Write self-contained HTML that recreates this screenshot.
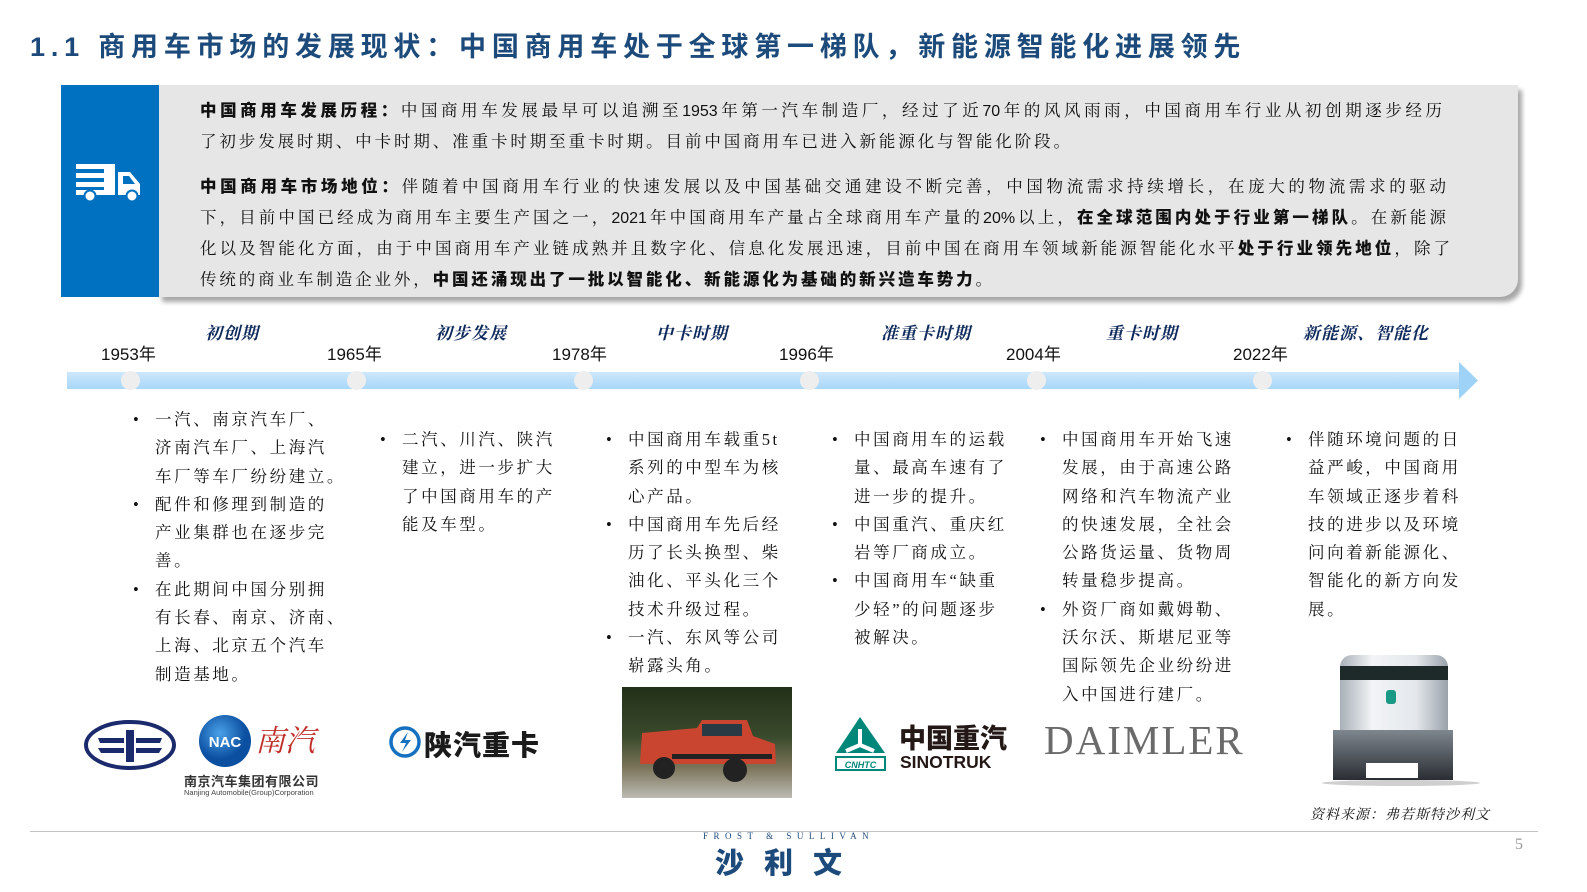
<!DOCTYPE html>
<html><head><meta charset="utf-8"><style>
*{margin:0;padding:0;box-sizing:border-box}
body{width:1587px;height:892px;background:#fff;position:relative;overflow:hidden;font-family:"Liberation Serif","Noto Serif CJK SC",serif;color:#111}
.a{position:absolute;white-space:nowrap}
.title{left:30px;top:25px;font-family:"Liberation Sans","Noto Sans CJK SC",sans-serif;font-weight:bold;font-size:27px;letter-spacing:5.8px;color:#1c4a7a}
.box{position:absolute;left:158px;top:85px;width:1360px;height:212px;background:#e6e6e6;border-bottom-right-radius:18px;box-shadow:4px 5px 5px rgba(0,0,0,.35)}
.blue{position:absolute;left:61px;top:85px;width:98px;height:212px;background:#0070c0}
.ln{position:absolute;left:200px;font-size:16.5px;height:22px;line-height:22px;text-align:justify;text-align-last:justify;white-space:nowrap}
.ln b{font-family:"Liberation Sans","Noto Sans CJK SC",sans-serif;font-weight:900}
.ln span.n{font-family:"Liberation Sans",sans-serif;font-size:16px}
.bar{position:absolute;left:67px;top:372px;width:1395px;height:17px;background:linear-gradient(#cde8fc,#a9d7f8)}
.dot{position:absolute;top:371px;width:19px;height:19px;border-radius:50%;background:#eeeeee}
.yr{position:absolute;top:340px;font-family:"Liberation Sans","Noto Sans CJK SC",sans-serif;font-size:17px;color:#111}
.ph{position:absolute;top:319px;font-family:"Liberation Serif","Noto Serif CJK SC",serif;font-weight:bold;font-style:italic;font-size:17px;color:#0f2a5c;letter-spacing:1px;transform:translateX(-50%)}
.col{position:absolute;font-size:16.5px;line-height:28.3px;letter-spacing:2.6px;white-space:nowrap}
.col div{position:relative;padding-left:22px}
.col div:before{content:"•";position:absolute;left:0;top:0}
</style></head><body>
<div class="a title">1.1 商用车市场的发展现状：中国商用车处于全球第一梯队，新能源智能化进展领先</div>

<div class="box"></div>
<div class="blue"></div>
<svg class="a" style="left:74px;top:164px" width="68" height="38" viewBox="0 0 68 38">
<rect x="2" y="0" width="32" height="5" fill="#fff"/><rect x="2" y="9" width="32" height="5" fill="#fff"/><rect x="2" y="18" width="32" height="5" fill="#fff"/><rect x="2" y="26" width="32" height="5" fill="#fff"/>
<rect x="30" y="0" width="11" height="31" fill="#fff"/>
<path d="M44 8h12l10 12v11H44z" fill="#fff"/><path d="M49 12h6l6 8H49z" fill="#0070c0"/>
<circle cx="16" cy="32" r="5.5" fill="#fff" stroke="#0070c0" stroke-width="2"/><circle cx="58" cy="32" r="5.5" fill="#fff" stroke="#0070c0" stroke-width="2"/>
</svg>

<div class="ln" style="top:100px;width:1242px"><b>中国商用车发展历程：</b>中国商用车发展最早可以追溯至<span class="n">1953</span>年第一汽车制造厂，经过了近<span class="n">70</span>年的风风雨雨，中国商用车行业从初创期逐步经历</div>
<div class="ln" style="top:131px;width:870px">了初步发展时期、中卡时期、准重卡时期至重卡时期。目前中国商用车已进入新能源化与智能化阶段。</div>
<div class="ln" style="top:176px;width:1246px"><b>中国商用车市场地位：</b>伴随着中国商用车行业的快速发展以及中国基础交通建设不断完善，中国物流需求持续增长，在庞大的物流需求的驱动</div>
<div class="ln" style="top:207px;width:1246px">下，目前中国已经成为商用车主要生产国之一，<span class="n">2021</span>年中国商用车产量占全球商用车产量的<span class="n">20%</span>以上，<b>在全球范围内处于行业第一梯队</b>。在新能源</div>
<div class="ln" style="top:238px;width:1250px">化以及智能化方面，由于中国商用车产业链成熟并且数字化、信息化发展迅速，目前中国在商用车领域新能源智能化水平<b>处于行业领先地位</b>，除了</div>
<div class="ln" style="top:269px;width:792px">传统的商业车制造企业外，<b>中国还涌现出了一批以智能化、新能源化为基础的新兴造车势力</b>。</div>

<div class="bar"></div>
<svg class="a" style="left:1459px;top:362px" width="20" height="37"><path d="M0 0L19 18.5L0 37z" fill="#9fd2f7"/></svg>
<div class="dot" style="left:121px"></div><div class="dot" style="left:347px"></div><div class="dot" style="left:574px"></div><div class="dot" style="left:800px"></div><div class="dot" style="left:1027px"></div><div class="dot" style="left:1253px"></div>
<div class="yr" style="left:101px">1953年</div><div class="yr" style="left:327px">1965年</div><div class="yr" style="left:552px">1978年</div><div class="yr" style="left:779px">1996年</div><div class="yr" style="left:1006px">2004年</div><div class="yr" style="left:1233px">2022年</div>
<div class="ph" style="left:232px">初创期</div><div class="ph" style="left:471px">初步发展</div><div class="ph" style="left:692px">中卡时期</div><div class="ph" style="left:926px">准重卡时期</div><div class="ph" style="left:1142px">重卡时期</div><div class="ph" style="left:1366px">新能源、智能化</div>

<div class="col" style="left:133px;top:406px">
<div>一汽、南京汽车厂、<br>济南汽车厂、上海汽<br>车厂等车厂纷纷建立。</div>
<div>配件和修理到制造的<br>产业集群也在逐步完<br>善。</div>
<div>在此期间中国分别拥<br>有长春、南京、济南、<br>上海、北京五个汽车<br>制造基地。</div></div>
<div class="col" style="left:380px;top:426px">
<div>二汽、川汽、陕汽<br>建立，进一步扩大<br>了中国商用车的产<br>能及车型。</div></div>
<div class="col" style="left:606px;top:426px">
<div>中国商用车载重5t<br>系列的中型车为核<br>心产品。</div>
<div>中国商用车先后经<br>历了长头换型、柴<br>油化、平头化三个<br>技术升级过程。</div>
<div>一汽、东风等公司<br>崭露头角。</div></div>
<div class="col" style="left:832px;top:426px">
<div>中国商用车的运载<br>量、最高车速有了<br>进一步的提升。</div>
<div>中国重汽、重庆红<br>岩等厂商成立。</div>
<div>中国商用车“缺重<br>少轻”的问题逐步<br>被解决。</div></div>
<div class="col" style="left:1040px;top:426px">
<div>中国商用车开始飞速<br>发展，由于高速公路<br>网络和汽车物流产业<br>的快速发展，全社会<br>公路货运量、货物周<br>转量稳步提高。</div>
<div>外资厂商如戴姆勒、<br>沃尔沃、斯堪尼亚等<br>国际领先企业纷纷进<br>入中国进行建厂。</div></div>
<div class="col" style="left:1286px;top:426px">
<div>伴随环境问题的日<br>益严峻，中国商用<br>车领域正逐步着科<br>技的进步以及环境<br>问向着新能源化、<br>智能化的新方向发<br>展。</div></div>

<!-- logos -->
<svg class="a" style="left:84px;top:720px" width="92" height="50" viewBox="0 0 92 50">
<ellipse cx="46" cy="25" rx="44" ry="23" fill="#fff" stroke="#1a2a6c" stroke-width="4"/>
<path d="M14 18h26v5H16zM52 18h26l-2 5H52zM14 28h26v5H17zM52 28h26l-3 5H52zM42 10h8v32h-8z" fill="#1a2a6c"/>
</svg>
<svg class="a" style="left:198px;top:714px" width="56" height="56"><defs><radialGradient id="g" cx="40%" cy="35%"><stop offset="0" stop-color="#4aa0e8"/><stop offset="1" stop-color="#0b4fa0"/></radialGradient></defs><circle cx="27" cy="27" r="26" fill="url(#g)"/><text x="27" y="33" text-anchor="middle" font-family="Liberation Sans" font-weight="bold" font-size="15" fill="#fff">NAC</text></svg>
<div class="a" style="left:255px;top:716px;font-size:30px;color:#c0302a;font-family:'Noto Serif CJK SC',serif;font-style:italic">南汽</div>
<div class="a" style="left:184px;top:771px;font-family:'Liberation Sans','Noto Sans CJK SC',sans-serif;font-weight:bold;font-size:13px;color:#333;letter-spacing:.5px">南京汽车集团有限公司</div>
<div class="a" style="left:184px;top:788px;font-family:'Liberation Sans',sans-serif;font-size:7.5px;color:#444">Nanjing Automobile(Group)Corporation</div>

<svg class="a" style="left:389px;top:726px" width="32" height="32"><circle cx="16" cy="16" r="14" fill="#fff" stroke="#1670c0" stroke-width="3.5"/><path d="M19 6l-8 11h6l-4 9 9-12h-6z" fill="#1670c0"/></svg>
<div class="a" style="left:424px;top:724px;font-family:'Noto Sans CJK SC',sans-serif;font-weight:900;font-size:28px;color:#1a1a1a;letter-spacing:1px">陕汽重卡</div>

<div class="a" style="left:622px;top:687px;width:170px;height:111px;background:linear-gradient(#233019 0%,#3a4a2c 45%,#7a7358 72%,#bdbbb4 100%)"></div>
<svg class="a" style="left:632px;top:716px" width="150" height="70"><path d="M10 17l55-5 5-8 45 0 6 16 22 8 1 20H8z" fill="#c9452f"/><rect x="40" y="38" width="100" height="5" fill="#222"/><circle cx="32" cy="52" r="11" fill="#222"/><circle cx="103" cy="54" r="12" fill="#222"/><rect x="70" y="8" width="40" height="12" fill="#2a3a44"/></svg>

<svg class="a" style="left:833px;top:715px" width="55" height="56" viewBox="0 0 55 56"><path d="M27 2L52 38H3z" fill="#00877a"/><path d="M27 14L27 30M27 30L13 36M27 30L41 36" stroke="#fff" stroke-width="4"/><rect x="3" y="42" width="49" height="13" fill="#fff" stroke="#00877a" stroke-width="2"/><text x="27.5" y="53" text-anchor="middle" font-family="Liberation Sans" font-weight="bold" font-style="italic" font-size="9" fill="#00877a">CNHTC</text></svg>
<div class="a" style="left:899px;top:722px;font-family:'Noto Sans CJK SC',sans-serif;font-weight:900;font-size:27px;line-height:30px;color:#231815">中国重汽</div>
<div class="a" style="left:900px;top:752px;font-family:'Liberation Sans',sans-serif;font-weight:bold;font-size:17.5px;color:#231815">SINOTRUK</div>

<div class="a" style="left:1044px;top:716px;font-family:'Liberation Serif',serif;font-size:41px;color:#6a6a6a;letter-spacing:2px">DAIMLER</div>

<div class="a" style="left:1340px;top:655px;width:108px;height:75px;border-radius:12px 12px 0 0;background:linear-gradient(90deg,#a8b0b8,#f2f4f6 30%,#e4e8ec 70%,#9aa2aa)"></div>
<div class="a" style="left:1340px;top:666px;width:108px;height:14px;background:#1e2a2a"></div>
<div class="a" style="left:1386px;top:690px;width:10px;height:14px;border-radius:3px;background:#1a9a86"></div>
<div class="a" style="left:1333px;top:730px;width:120px;height:50px;background:linear-gradient(#7e868e,#2a2e33)"></div>
<div class="a" style="left:1366px;top:763px;width:52px;height:15px;background:#fff"></div>
<div class="a" style="left:1322px;top:780px;width:158px;height:6px;border-radius:50%;background:#cfcfcf"></div>

<div class="a" style="left:1310px;top:804px;font-size:14px;font-style:italic;color:#111;letter-spacing:1px">资料来源：弗若斯特沙利文</div>
<div class="a" style="left:30px;top:831px;width:1508px;height:1px;background:#c3c3c3"></div>
<div class="a" style="left:703px;top:831px;font-family:'Liberation Serif',serif;font-size:9px;letter-spacing:5.5px;color:#1c4a7a">FROST &amp; SULLIVAN</div>
<div class="a" style="left:715px;top:840px;font-family:'Noto Sans CJK SC',sans-serif;font-weight:900;font-size:29px;letter-spacing:20px;color:#1c4a7a">沙利文</div>
<div class="a" style="left:1515px;top:836px;font-size:16px;color:#999">5</div>
</body></html>
